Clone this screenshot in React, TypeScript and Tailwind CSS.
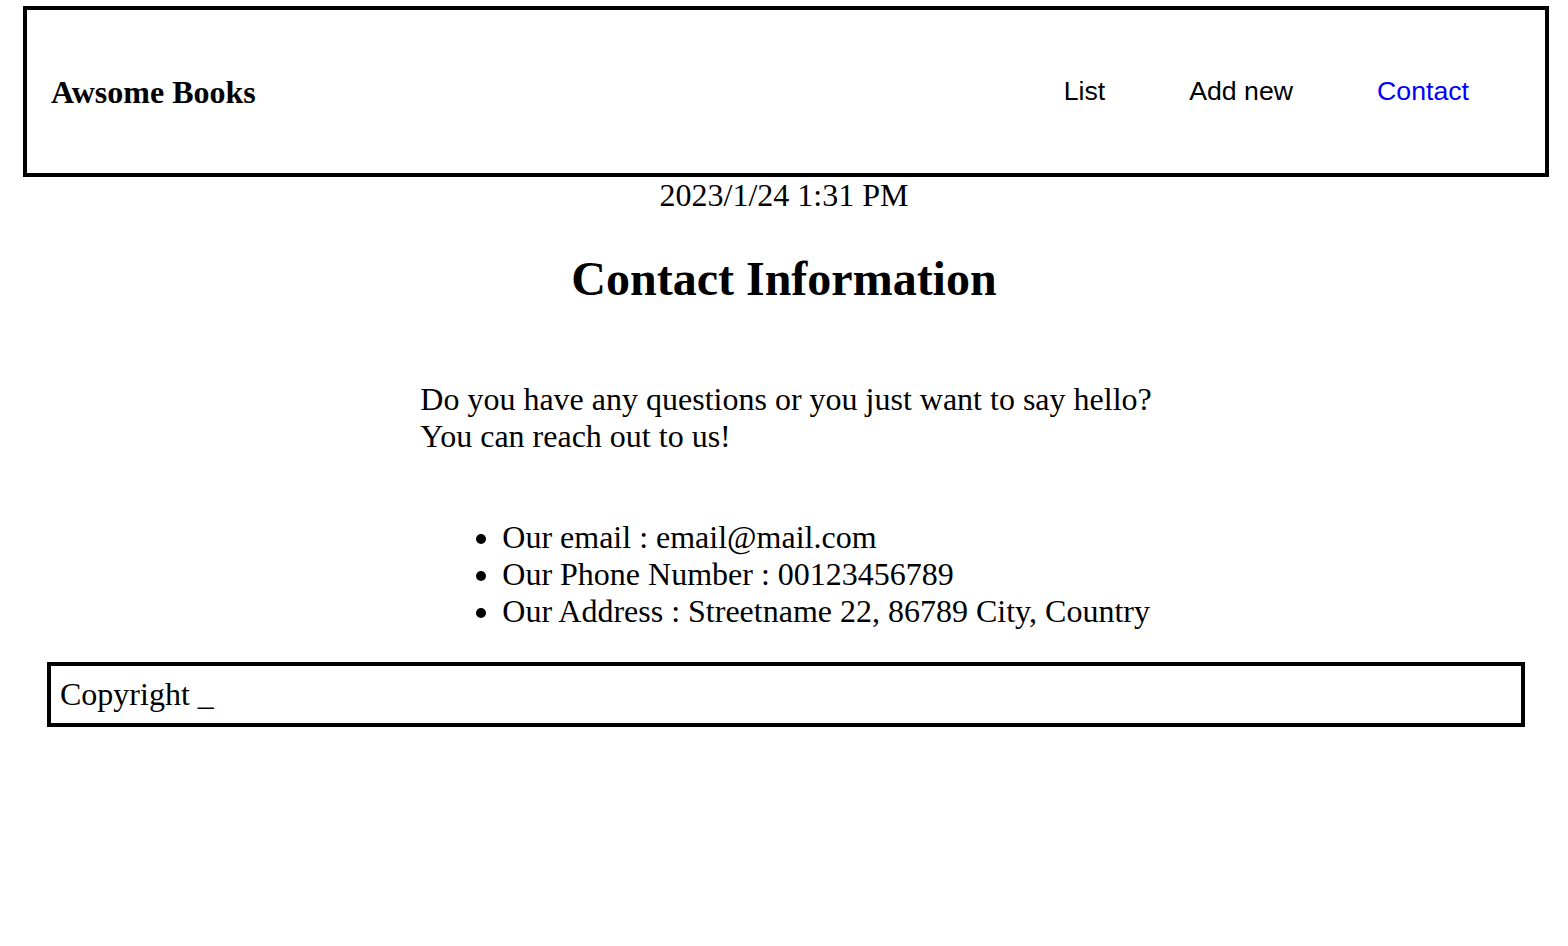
export default function App() {
  return (
    <div className="min-h-screen bg-white text-black font-['Liberation_Serif','Times_New_Roman',serif] text-[32px]">
      <header className="mt-[6px] ml-[23px] mr-[19px] h-[171px] border-4 border-black flex items-center justify-between pl-[24px] pr-[76px]">
        <h1 className="text-[32px] font-bold">Awsome Books</h1>
        <nav className="flex gap-[84px] font-['Liberation_Sans',Arial,sans-serif] text-[26.7px]">
          <a href="#list" className="text-black">List</a>
          <a href="#add" className="text-black">Add new</a>
          <a href="#contact" className="text-[#0000ff]">Contact</a>
        </nav>
      </header>

      <p className="text-center leading-[36.8px]">2023/1/24 1:31 PM</p>

      <section className="flex flex-col items-center">
        <h2 className="mt-[38px] text-[48px] font-bold leading-[53px]">Contact Information</h2>
        <div className="mt-[76px] w-fit ml-[4px]">
          <p className="leading-[36.8px]">
            Do you have any questions or you just want to say hello?
            <br />
            You can reach out to us!
          </p>
          <ul className="mt-[65px] pl-[82px] list-disc leading-[36.8px]">
            <li>Our email : email@mail.com</li>
            <li>Our Phone Number : 00123456789</li>
            <li>Our Address : Streetname 22, 86789 City, Country</li>
          </ul>
        </div>
      </section>

      <footer className="mt-[32px] ml-[47px] mr-[43px] border-4 border-black px-[9px] pt-[10px] pb-[10px] leading-[36.8px]">
        Copyright _
      </footer>
    </div>
  );
}
